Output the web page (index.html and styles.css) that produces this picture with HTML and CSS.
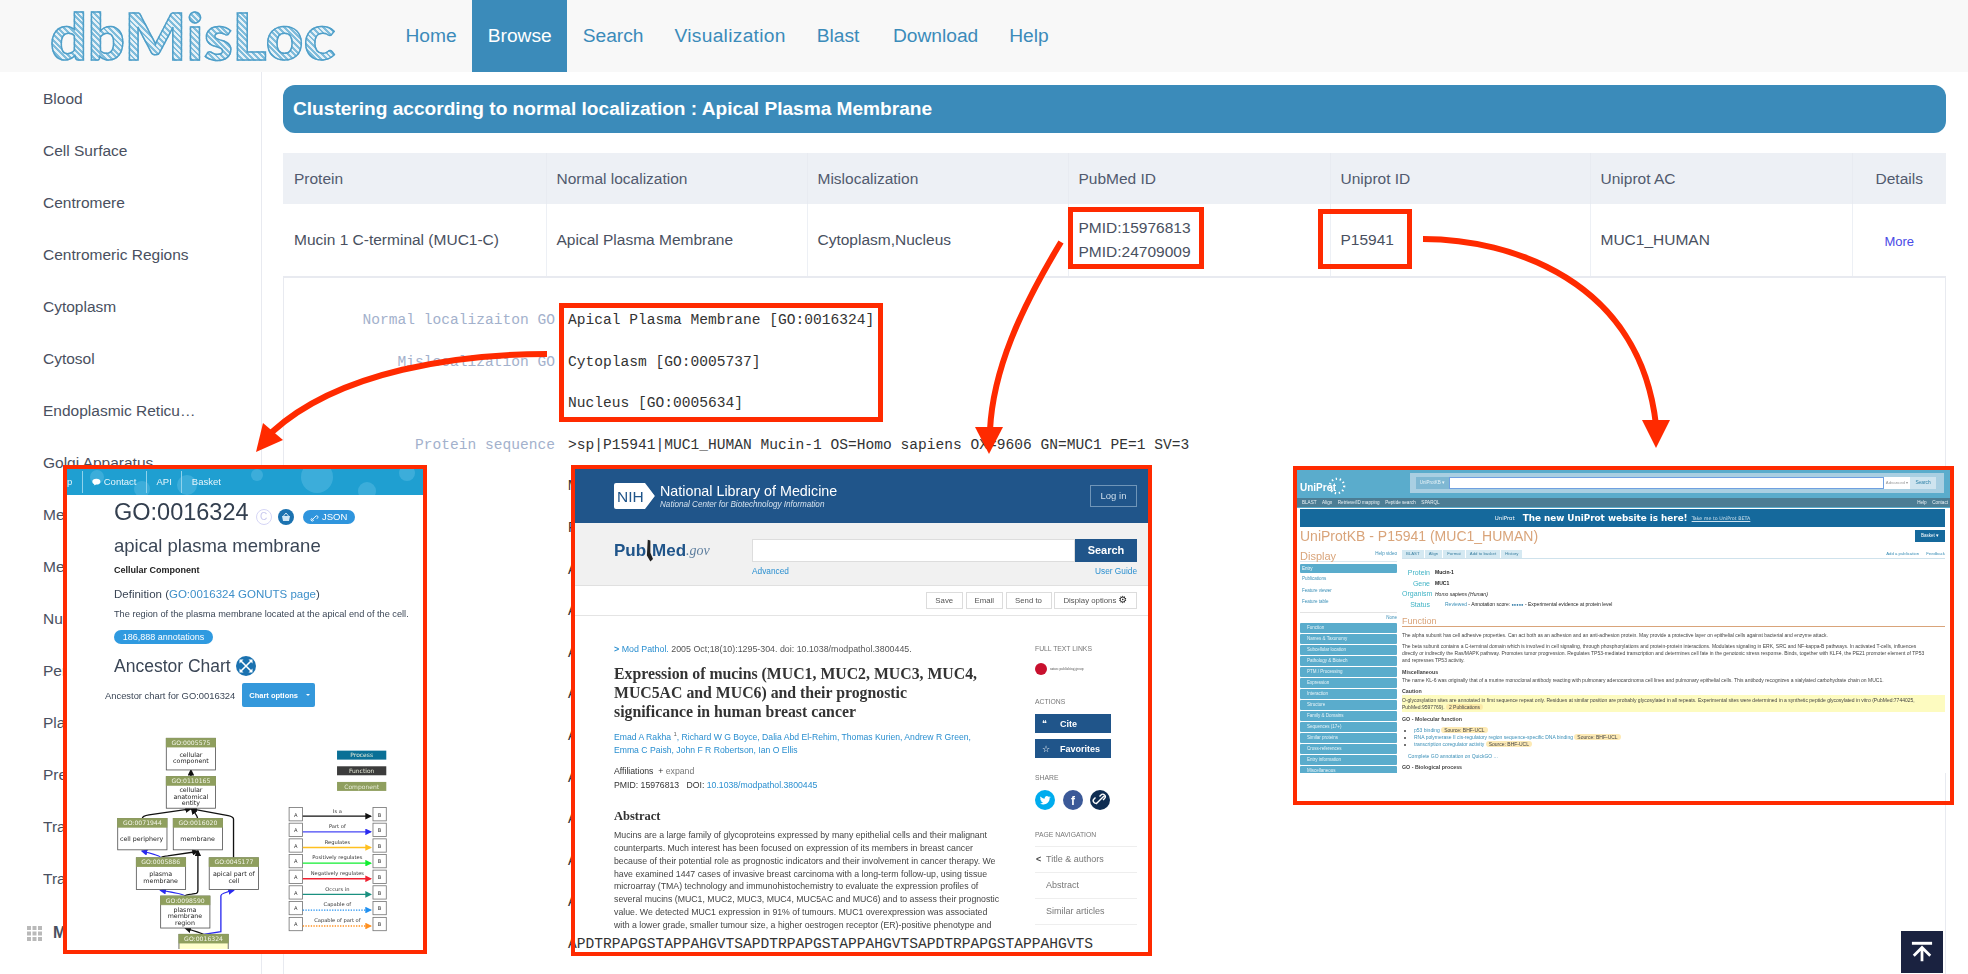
FILE: index.html
```html
<!DOCTYPE html>
<html lang="en">
<head>
<meta charset="utf-8">
<title>dbMisLoc</title>
<link rel="stylesheet" href="styles.css">
</head>
<body>
<div class="page">
  <header class="topbar">
    <div class="logo"><span class="logo-text">dbMisLoc</span></div>
    <nav class="nav">
      <a class="nav-item">Home</a>
      <a class="nav-item active">Browse</a>
      <a class="nav-item">Search</a>
      <a class="nav-item nav-wide">Visualization</a>
      <a class="nav-item nav-blast">Blast</a>
      <a class="nav-item">Download</a>
      <a class="nav-item">Help</a>
    </nav>
  </header>
  <div class="main">
    <aside class="sidebar">
      <ul class="side-list">
        <li>Blood</li>
        <li>Cell Surface</li>
        <li>Centromere</li>
        <li>Centromeric Regions</li>
        <li>Cytoplasm</li>
        <li>Cytosol</li>
        <li>Endoplasmic Reticulum</li>
        <li>Golgi Apparatus</li>
        <li>Membrane</li>
        <li>Metaphase Plate</li>
        <li>Nucleus</li>
        <li>Perinuclear Region</li>
        <li>Plasma Membrane</li>
        <li>Presynaptic Membrane</li>
        <li>Trans-Golgi Network</li>
        <li>Transport Vesicle</li>
      </ul>
      <div class="side-foot">
        <svg class="grid-ico" viewBox="0 0 15 15"><g fill="#b9b9b9"><rect width="4" height="4"/><rect x="5.5" width="4" height="4"/><rect x="11" width="4" height="4"/><rect y="5.5" width="4" height="4"/><rect x="5.5" y="5.5" width="4" height="4"/><rect x="11" y="5.5" width="4" height="4"/><rect y="11" width="4" height="4"/><rect x="5.5" y="11" width="4" height="4"/><rect x="11" y="11" width="4" height="4"/></g></svg>
        <span class="side-foot-label">Mislocalization</span>
      </div>
    </aside>
    <main class="content">
      <h1 class="title-bar">Clustering according to normal localization : Apical Plasma Membrane</h1>
      <div class="table-wrap">
        <table class="data-table">
          <colgroup><col class="c1"><col class="c2"><col class="c3"><col class="c4"><col class="c5"><col class="c6"><col class="c7"></colgroup>
          <thead>
            <tr><th>Protein</th><th>Normal localization</th><th>Mislocalization</th><th>PubMed ID</th><th>Uniprot ID</th><th>Uniprot AC</th><th class="center">Details</th></tr>
          </thead>
          <tbody>
            <tr>
              <td>Mucin 1 C-terminal (MUC1-C)</td>
              <td>Apical Plasma Membrane</td>
              <td>Cytoplasm,Nucleus</td>
              <td><div class="pmid">PMID:15976813</div><div class="pmid">PMID:24709009</div></td>
              <td>P15941</td>
              <td>MUC1_HUMAN</td>
              <td class="center"><a class="more">More</a></td>
            </tr>
          </tbody>
        </table>
        <div class="detail">
          <div class="d-label">Normal localizaiton GO</div><div class="d-val">Apical Plasma Membrane [GO:0016324]</div>
          <div class="d-label">Mislocalization GO</div><div class="d-val">Cytoplasm [GO:0005737]</div>
          <div class="d-label"></div><div class="d-val">Nucleus [GO:0005634]</div>
          <div class="d-label">Protein sequence</div><div class="d-val">&gt;sp|P15941|MUC1_HUMAN Mucin-1 OS=Homo sapiens OX=9606 GN=MUC1 PE=1 SV=3</div>
          <div class="d-label"></div><div class="d-val">MTPGTQSPFFLLLLLTVLTVVTGSGHASSTPGGEKETSATQRSSVPSSTEKNAFNSSLED</div>
          <div class="d-label"></div><div class="d-val">PSTDYYQELQRDISEMFLQIYKQGGFLGLSNIKFRPGSVVVQLTLAFREGTINVHDVETQ</div>
          <div class="d-label"></div><div class="d-val">APDTRPAPGSTAPPAHGVTSAPDTRPAPGSTAPPAHGVTSAPDTRPAPGSTAPPAHGVTS</div>
          <div class="d-label"></div><div class="d-val">APDTRPAPGSTAPPAHGVTSAPDTRPAPGSTAPPAHGVTSAPDTRPAPGSTAPPAHGVTS</div>
          <div class="d-label"></div><div class="d-val">APDTRPAPGSTAPPAHGVTSAPDTRPAPGSTAPPAHGVTSAPDTRPAPGSTAPPAHGVTS</div>
          <div class="d-label"></div><div class="d-val">APDTRPAPGSTAPPAHGVTSAPDTRPAPGSTAPPAHGVTSAPDTRPAPGSTAPPAHGVTS</div>
          <div class="d-label"></div><div class="d-val">APDTRPAPGSTAPPAHGVTSAPDTRPAPGSTAPPAHGVTSAPDTRPAPGSTAPPAHGVTS</div>
          <div class="d-label"></div><div class="d-val">APDTRPAPGSTAPPAHGVTSAPDTRPAPGSTAPPAHGVTSAPDTRPAPGSTAPPAHGVTS</div>
          <div class="d-label"></div><div class="d-val">APDTRPAPGSTAPPAHGVTSAPDTRPAPGSTAPPAHGVTSAPDTRPAPGSTAPPAHGVTS</div>
          <div class="d-label"></div><div class="d-val">APDTRPAPGSTAPPAHGVTSAPDTRPAPGSTAPPAHGVTSAPDTRPAPGSTAPPAHGVTS</div>
          <div class="d-label"></div><div class="d-val">APDTRPAPGSTAPPAHGVTSAPDTRPAPGSTAPPAHGVTSAPDTRPAPGSTAPPAHGVTS</div>
          <div class="d-label"></div><div class="d-val">APDTRPAPGSTAPPAHGVTSAPDTRPAPGSTAPPAHGVTSAPDTRPAPGSTAPPAHGVTS</div>
          <div class="d-label"></div><div class="d-val">APDTRPAPGSTAPPAHGVTSAPDTRPAPGSTAPPAHGVTSAPDTRPAPGSTAPPAHGVTS</div>
        </div>
      </div>
    </main>
  </div>

  <!-- Annotation overlay: highlight boxes -->
  <div class="hl hl-go"></div>
  <div class="hl hl-pmid"></div>
  <div class="hl hl-uni"></div>

  <!-- GO window -->
  <section class="shot shot-go">
    <div class="go-inner">
      <div class="go-top">
        <svg class="go-bubbles" viewBox="0 0 356 26" preserveAspectRatio="none"><g fill="#5fc0e6" opacity=".45"><circle cx="30" cy="8" r="7"/><circle cx="120" cy="16" r="10"/><circle cx="190" cy="6" r="6"/><circle cx="250" cy="8" r="16"/><circle cx="300" cy="22" r="9"/><circle cx="340" cy="4" r="8"/><circle cx="75" cy="20" r="8"/></g></svg>
        <span class="go-tab go-tab-p">p</span>
        <span class="go-tab go-tab-contact"><svg class="go-chat" viewBox="0 0 10 8"><ellipse cx="5" cy="3.6" rx="4.6" ry="3.2" fill="#fff"/><path d="M3 6l-1 2 3-1.4z" fill="#fff"/></svg>Contact</span>
        <span class="go-tab">API</span>
        <span class="go-tab go-tab-last">Basket</span>
      </div>
      <div class="go-body">
        <div class="go-idrow">
          <h2 class="go-id">GO:0016324</h2>
          <span class="go-c">C</span>
          <svg class="go-basket" viewBox="0 0 16 16"><circle cx="8" cy="8" r="8" fill="#1b72b0"/><path d="M4 7h8l-1 5H5z" fill="#cfe6f5"/><path d="M5.5 7L8 4l2.500 3" fill="none" stroke="#cfe6f5"/></svg>
          <span class="go-json"><svg class="go-link" viewBox="0 0 10 10"><path d="M1.500 8.500l3-3m-2 0l-1 1a1.400 1.400 0 0 0 2 2l1-1m1-3l1-1a1.400 1.400 0 0 1 2 2l-1 1m-3-1l2-2" fill="none" stroke="#fff" stroke-width="1"/></svg>JSON</span>
        </div>
        <div class="go-name">apical plasma membrane</div>
        <div class="go-kind">Cellular Component</div>
        <div class="go-def">Definition (<a class="go-a">GO:0016324 GONUTS page</a>)</div>
        <div class="go-desc">The region of the plasma membrane located at the apical end of the cell.</div>
        <div class="go-pill">186,888 annotations</div>
        <div class="go-anc"><span>Ancestor Chart</span>
          <svg class="go-expand" viewBox="0 0 20 20"><circle cx="10" cy="10" r="10" fill="#1b72b0"/><path d="M5 5l10 10M15 5L5 15" stroke="#fff" stroke-width="1.600"/><path d="M3.500 3.500h4l-4 4zM16.500 3.500v4l-4-4zM3.500 16.500v-4l4 4zM16.500 16.500h-4l4-4z" fill="#fff"/></svg>
        </div>
        <div class="go-chartrow"><span>Ancestor chart for GO:0016324</span><span class="go-btn">Chart options<i class="go-caret"></i></span></div>
        <svg class="go-chart" viewBox="340 830 830 640">
          <defs>
            <marker id="mk" markerWidth="5" markerHeight="5" refX="4" refY="2.500" orient="auto"><path d="M0 0L5 2.500 0 5z" fill="#111"/></marker>
            <marker id="mb" markerWidth="5" markerHeight="5" refX="4" refY="2.500" orient="auto"><path d="M0 0L5 2.500 0 5z" fill="#2a2af0"/></marker>
            <marker id="my" markerWidth="5" markerHeight="5" refX="4" refY="2.500" orient="auto"><path d="M0 0L5 2.500 0 5z" fill="#ffc020"/></marker>
            <marker id="mg" markerWidth="5" markerHeight="5" refX="4" refY="2.500" orient="auto"><path d="M0 0L5 2.500 0 5z" fill="#10ee30"/></marker>
            <marker id="mr" markerWidth="5" markerHeight="5" refX="4" refY="2.500" orient="auto"><path d="M0 0L5 2.500 0 5z" fill="#f02030"/></marker>
            <marker id="mt" markerWidth="5" markerHeight="5" refX="4" refY="2.500" orient="auto"><path d="M0 0L5 2.500 0 5z" fill="#1a9080"/></marker>
            <marker id="ml" markerWidth="5" markerHeight="5" refX="4" refY="2.500" orient="auto"><path d="M0 0L5 2.500 0 5z" fill="#2090f0"/></marker>
            <marker id="mo" markerWidth="5" markerHeight="5" refX="4" refY="2.500" orient="auto"><path d="M0 0L5 2.500 0 5z" fill="#ff9020"/></marker>
          </defs>
          <g fill="none" stroke-width="4">
            <path class="e-k" d="M570 950V933" marker-end="url(#mk)"/>
            <path class="e-k" d="M424 1078q0-8 20-11l125-18" marker-end="url(#mk)"/>
            <path class="e-k" d="M590 1078q0-8-18-29" marker-end="url(#mk)"/>
            <path class="e-k" d="M698 1196V1080q0-8-16-11l-110-20" marker-end="url(#mk)"/>
            <path class="e-k" d="M480 1196q0-4 20-6l90-13" marker-end="url(#mk)"/>
            <path class="e-k" d="M552 1311q0-4 20-6l14-2q5-1 5-10V1175" marker-end="url(#mk)"/>
            <path class="e-k" d="M608 1426q-12-6-54-18" marker-end="url(#mk)"/>
            <path class="e-b" d="M480 1196q0-6-57-20" marker-end="url(#mb)"/>
            <path class="e-b" d="M552 1311q0-6-73-17" marker-end="url(#mb)"/>
            <path class="e-b" d="M608 1426l52-8V1310q0-8 38-16" marker-end="url(#mb)"/>
          </g>
          <g class="node"><rect x="496" y="837" width="148" height="95"/><rect class="nh" x="496" y="837" width="148" height="26"/><text class="nt" x="570" y="857">GO:0005575</text><text x="570" y="892">cellular</text><text x="570" y="912">component</text></g>
          <g class="node"><rect x="496" y="952" width="148" height="95"/><rect class="nh" x="496" y="952" width="148" height="26"/><text class="nt" x="570" y="972">GO:0110165</text><text x="570" y="998">cellular</text><text x="570" y="1018">anatomical</text><text x="570" y="1037">entity</text></g>
          <g class="node"><rect x="350" y="1078" width="148" height="94"/><rect class="nh" x="350" y="1078" width="148" height="26"/><text class="nt" x="424" y="1098">GO:0071944</text><text x="422" y="1144">cell periphery</text></g>
          <g class="node"><rect x="517" y="1078" width="148" height="94"/><rect class="nh" x="517" y="1078" width="148" height="26"/><text class="nt" x="591" y="1098">GO:0016020</text><text x="590" y="1144">membrane</text></g>
          <g class="node"><rect x="406" y="1196" width="148" height="95"/><rect class="nh" x="406" y="1196" width="148" height="26"/><text class="nt" x="479" y="1216">GO:0005886</text><text x="479" y="1252">plasma</text><text x="479" y="1271">membrane</text></g>
          <g class="node"><rect x="625" y="1196" width="148" height="95"/><rect class="nh" x="625" y="1196" width="148" height="26"/><text class="nt" x="699" y="1216">GO:0045177</text><text x="699" y="1252">apical part of</text><text x="699" y="1271">cell</text></g>
          <g class="node"><rect x="479" y="1311" width="148" height="96"/><rect class="nh" x="479" y="1311" width="148" height="26"/><text class="nt" x="553" y="1331">GO:0098590</text><text x="552" y="1358">plasma</text><text x="552" y="1377">membrane</text><text x="552" y="1397">region</text></g>
          <g class="node"><rect class="ny" x="534" y="1426" width="148" height="50"/><rect class="nh" x="534" y="1426" width="148" height="26"/><text class="nt" x="608" y="1446">GO:0016324</text></g>
          <g class="legend">
            <rect fill="#0a7096" x="1009" y="874" width="148" height="27"/><text x="1083" y="894">Process</text>
            <rect fill="#3c3c3c" x="1009" y="921" width="148" height="27"/><text x="1083" y="941">Function</text>
            <rect fill="#8f9f5e" x="1009" y="968" width="148" height="27"/><text x="1083" y="988">Component</text>
          </g>
          <g class="rel">
            <g><rect x="865" y="1045" width="40" height="40"/><rect x="1117" y="1045" width="40" height="40"/><text x="885" y="1072">A</text><text x="1137" y="1072">B</text><text x="1010" y="1060">Is a</text><path d="M906 1071H1110" stroke="#111" marker-end="url(#mk)"/></g>
            <g><rect x="865" y="1092" width="40" height="40"/><rect x="1117" y="1092" width="40" height="40"/><text x="885" y="1119">A</text><text x="1137" y="1119">B</text><text x="1010" y="1106">Part of</text><path d="M906 1118H1110" stroke="#4646f5" marker-end="url(#mb)"/></g>
            <g><rect x="865" y="1139" width="40" height="40"/><rect x="1117" y="1139" width="40" height="40"/><text x="885" y="1166">A</text><text x="1137" y="1166">B</text><text x="1010" y="1154">Regulates</text><path d="M906 1165H1110" stroke="#ffc020" marker-end="url(#my)"/></g>
            <g><rect x="865" y="1186" width="40" height="40"/><rect x="1117" y="1186" width="40" height="40"/><text x="885" y="1213">A</text><text x="1137" y="1213">B</text><text x="1010" y="1201">Positively regulates</text><path d="M906 1212H1110" stroke="#10ee30" marker-end="url(#mg)"/></g>
            <g><rect x="865" y="1233" width="40" height="40"/><rect x="1117" y="1233" width="40" height="40"/><text x="885" y="1260">A</text><text x="1137" y="1260">B</text><text x="1010" y="1248">Negatively regulates</text><path d="M906 1259H1110" stroke="#f02030" marker-end="url(#mr)"/></g>
            <g><rect x="865" y="1280" width="40" height="40"/><rect x="1117" y="1280" width="40" height="40"/><text x="885" y="1307">A</text><text x="1137" y="1307">B</text><text x="1010" y="1295">Occurs in</text><path d="M906 1306H1110" stroke="#1a9080" marker-end="url(#mt)"/></g>
            <g><rect x="865" y="1327" width="40" height="40"/><rect x="1117" y="1327" width="40" height="40"/><text x="885" y="1354">A</text><text x="1137" y="1354">B</text><text x="1010" y="1342">Capable of</text><path d="M906 1353H1110" stroke="#2090f0" stroke-dasharray="4 4" marker-end="url(#ml)"/></g>
            <g><rect x="865" y="1375" width="40" height="40"/><rect x="1117" y="1375" width="40" height="40"/><text x="885" y="1402">A</text><text x="1137" y="1402">B</text><text x="1010" y="1390">Capable of part of</text><path d="M906 1401H1110" stroke="#ff9020" stroke-dasharray="4 4" marker-end="url(#mo)"/></g>
          </g>
        </svg>
      </div>
    </div>
  </section>

  <!-- PubMed window -->
  <section class="shot shot-pm">
    <div class="pm-inner">
      <div class="pm-top">
        <div class="pm-brand">
          <svg class="nih" viewBox="0 0 41 26"><path d="M2 0h29l10 13-10 13H2a2 2 0 0 1-2-2V2a2 2 0 0 1 2-2z" fill="#fff"/><path d="M33 0l9 13-9 13" fill="none" stroke="#20558a" stroke-width="1.500"/><text class="nih-t" x="3" y="19">NIH</text></svg>
          <div>
            <div class="pm-nlm">National Library of Medicine</div>
            <div class="pm-ncbi">National Center for Biotechnology Information</div>
          </div>
        </div>
        <span class="pm-login">Log in</span>
      </div>
      <div class="pm-search">
        <div class="pm-logo"><span class="pm-pub">Pub</span><svg class="pm-mark" viewBox="0 0 8 26"><path d="M2 0l3 1v14l3 7-3 3-4-7z" fill="#222"/></svg><span class="pm-pub">Med</span><span class="pm-gov">.gov</span></div>
        <div class="pm-form">
          <div class="pm-formrow"><span class="pm-input"></span><span class="pm-go">Search</span></div>
          <div class="pm-links"><a>Advanced</a><a>User Guide</a></div>
        </div>
      </div>
      <div class="pm-actions"><span class="pm-act">Save</span><span class="pm-act">Email</span><span class="pm-act">Send to</span><span class="pm-act pm-act-wide">Display options <b class="pm-gear">⚙</b></span></div>
      <div class="pm-article">
        <div class="pm-main">
          <div class="pm-cite"><a class="pm-a"><b>&gt;</b> Mod Pathol.</a> 2005 Oct;18(10):1295-304. doi: 10.1038/modpathol.3800445.</div>
          <h3 class="pm-title">Expression of mucins (MUC1, MUC2, MUC3, MUC4, MUC5AC and MUC6) and their prognostic significance in human breast cancer</h3>
          <div class="pm-auth">Emad A Rakha <sup class="pm-sup">1</sup>, Richard W G Boyce, Dalia Abd El-Rehim, Thomas Kurien, Andrew R Green, Emma C Paish, John F R Robertson, Ian O Ellis</div>
          <div class="pm-aff">Affiliations &nbsp;+ <span class="pm-mute">expand</span></div>
          <div class="pm-ids">PMID: 15976813 &nbsp;&nbsp;DOI: <a class="pm-a">10.1038/modpathol.3800445</a></div>
          <h4 class="pm-abs">Abstract</h4>
          <p class="pm-para">Mucins are a large family of glycoproteins expressed by many epithelial cells and their malignant counterparts. Much interest has been focused on expression of its members in breast cancer because of their potential role as prognostic indicators and their involvement in cancer therapy. We have examined 1447 cases of invasive breast carcinoma with a long-term follow-up, using tissue microarray (TMA) technology and immunohistochemistry to evaluate the expression profiles of several mucins (MUC1, MUC2, MUC3, MUC4, MUC5AC and MUC6) and to assess their prognostic value. We detected MUC1 expression in 91% of tumours. MUC1 overexpression was associated with a lower grade, smaller tumour size, a higher oestrogen receptor (ER)-positive phenotype and</p>
        </div>
        <div class="pm-side">
          <div class="pm-h">FULL TEXT LINKS</div>
          <div class="pm-npg"><i class="pm-npg-dot"></i>nature publishing group</div>
          <div class="pm-h pm-h-act">ACTIONS</div>
          <div class="pm-sbtn"><b>❝</b><span>Cite</span></div>
          <div class="pm-sbtn"><b>☆</b><span>Favorites</span></div>
          <div class="pm-h pm-h-share">SHARE</div>
          <div class="pm-share">
            <svg class="pm-circle" viewBox="0 0 20 20"><circle cx="10" cy="10" r="10" fill="#00acee"/><path d="M15 7c-.4.200-.800.300-1.200.400.400-.300.800-.700.900-1.200-.4.300-.900.400-1.300.500a2.100 2.100 0 0 0-3.600 1.900C8 8.500 6.500 7.700 5.500 6.500c-.6 1-.3 2.200.6 2.800-.3 0-.6-.1-.9-.3 0 1 .7 1.900 1.700 2.100-.3.100-.6.100-.9 0 .3.900 1.100 1.400 2 1.500-.9.700-2 1-3 .9 3.800 2.300 9.700.4 9.700-5.700.4-.200.800-.600 1.300-1.100z" fill="#fff"/></svg>
            <svg class="pm-circle" viewBox="0 0 20 20"><circle cx="10" cy="10" r="10" fill="#3b5998"/><text class="pm-f" x="10" y="15">f</text></svg>
            <svg class="pm-circle" viewBox="0 0 20 20"><circle cx="10" cy="10" r="10" fill="#0f2d52"/><path d="M6 14l8-8m-4.500.500l1.500-1.500a2.300 2.300 0 0 1 3.500 3.500l-1.500 1.500m-4 1l-1.500 1.500a2.300 2.300 0 0 1-3.500-3.500l1.500-1.500" fill="none" stroke="#fff" stroke-width="1.400"/></svg>
          </div>
          <div class="pm-h pm-h-nav">PAGE NAVIGATION</div>
          <div class="pm-navlist">
            <div class="pm-navi"><b class="pm-chev">&lt;</b>Title &amp; authors</div>
            <div class="pm-navi">Abstract</div>
            <div class="pm-navi">Similar articles</div>
          </div>
        </div>
      </div>
    </div>
  </section>

  <!-- UniProt window -->
  <section class="shot shot-up">
    <div class="up-inner">
      <div class="up-head">
        <div class="up-headrow">
          <div class="up-logo">UniProt<svg class="up-ring" viewBox="0 0 20 20"><circle cx="10" cy="10" r="8" fill="none" stroke="#fff" stroke-width="2.500" stroke-dasharray="1.500 3"/></svg></div>
          <div class="up-searchbox">
            <span class="up-drop">UniProtKB ▾</span><span class="up-input"></span><span class="up-adv">Advanced ▾</span><span class="up-go">Search</span>
          </div>
        </div>
        <div class="up-nav"><span>BLAST</span><span>Align</span><span>Retrieve/ID mapping</span><span>Peptide search</span><span>SPARQL</span><span class="up-nav-r">Help</span><span>Contact</span></div>
      </div>
      <div class="up-banner"><span class="up-banner-logo">UniProt</span><b>The new UniProt website is here!</b><u>Take me to UniProt BETA</u></div>
      <div class="up-titlerow"><h3 class="up-title">UniProtKB - P15941 (MUC1_HUMAN)</h3><span class="up-basket">Basket ▾</span></div>
      <div class="up-cols">
        <div class="up-left">
          <div class="up-disp"><span class="up-display">Display</span><span class="up-help">Help video</span></div>
          <div class="up-sel">Entry</div>
          <div class="up-link">Publications</div>
          <div class="up-link">Feature viewer</div>
          <div class="up-link">Feature table</div>
          <div class="up-none">None</div>
          <div class="up-item">Function</div>
          <div class="up-item">Names &amp; Taxonomy</div>
          <div class="up-item">Subcellular location</div>
          <div class="up-item">Pathology &amp; Biotech</div>
          <div class="up-item">PTM / Processing</div>
          <div class="up-item">Expression</div>
          <div class="up-item">Interaction</div>
          <div class="up-item">Structure</div>
          <div class="up-item">Family &amp; Domains</div>
          <div class="up-item">Sequences (17+)</div>
          <div class="up-item">Similar proteins</div>
          <div class="up-item">Cross-references</div>
          <div class="up-item">Entry information</div>
          <div class="up-item">Miscellaneous</div>
        </div>
        <div class="up-right">
          <div class="up-tools"><span class="up-tool">BLAST</span><span class="up-tool">Align</span><span class="up-tool">Format</span><span class="up-tool">Add to basket</span><span class="up-tool">History</span><span class="up-tool-r">Add a publication</span><span class="up-tool-r">Feedback</span></div>
          <div class="up-facts">
            <span class="up-k">Protein</span><b class="up-v">Mucin-1</b>
            <span class="up-k">Gene</span><b class="up-v">MUC1</b>
            <span class="up-k">Organism</span><i class="up-v">Homo sapiens (Human)</i>
            <span class="up-k">Status</span><span class="up-v"><span class="up-rev">Reviewed</span> - Annotation score: <span class="up-dots">●●●●●</span> - Experimental evidence at protein level</span>
          </div>
          <h4 class="up-h">Function</h4>
          <p class="up-p">The alpha subunit has cell adhesive properties. Can act both as an adhesion and an anti-adhesion protein. May provide a protective layer on epithelial cells against bacterial and enzyme attack.</p>
          <p class="up-p">The beta subunit contains a C-terminal domain which is involved in cell signaling, through phosphorylations and protein-protein interactions. Modulates signaling in ERK, SRC and NF-kappa-B pathways. In activated T-cells, influences<br>directly or indirectly the Ras/MAPK pathway. Promotes tumor progression. Regulates TP53-mediated transcription and determines cell fate in the genotoxic stress response. Binds, together with KLF4, the PE21 promoter element of TP53<br>and represses TP53 activity.</p>
          <div class="up-sub up-sub-m">Miscellaneous</div>
          <p class="up-p up-p-m">The name KL-6 was originally that of a murine monoclonal antibody reacting with pulmonary adenocarcinoma cell lines and pulmonary epithelial cells. This antibody recognizes a sialylated carbohydrate chain on MUC1.</p>
          <div class="up-sub">Caution</div>
          <p class="up-caution">O-glycosylation sites are annotated in first sequence repeat only. Residues at similar position are probably glycosylated in all repeats. Experimental sites were determined in a synthetic peptide glycosylated in vitro (PubMed:7744025,<br>PubMed:9597769). <span class="up-src up-src-y">2 Publications</span></p>
          <div class="up-sub up-sub-go">GO - Molecular function</div>
          <ul class="up-list">
            <li><a>p53 binding</a> <span class="up-src">Source: BHF-UCL</span></li>
            <li><a>RNA polymerase II cis-regulatory region sequence-specific DNA binding</a> <span class="up-src">Source: BHF-UCL</span></li>
            <li><a>transcription coregulator activity</a> <span class="up-src">Source: BHF-UCL</span></li>
          </ul>
          <div class="up-complete">Complete GO annotation on QuickGO ...</div>
          <div class="up-sub">GO - Biological process</div>
        </div>
      </div>
    </div>
  </section>

  <!-- Red arrows -->
  <svg class="arrows" viewBox="0 0 1968 974">
    <g fill="none" stroke="#ff2a00" stroke-width="6">
      <path d="M547 354C460 354 340 370 272 432"/>
      <path d="M1061 242C1020 310 993 370 990 430"/>
      <path d="M1423 239C1510 239 1640 280 1656 425"/>
    </g>
    <g fill="#ff2a00">
      <path d="M256 452L263 423 283 440z"/>
      <path d="M989 454L975 427H1003z"/>
      <path d="M1656 448L1642 420H1670z"/>
    </g>
  </svg>

  <a class="to-top"><svg class="to-top-ico" viewBox="0 0 24 24"><path d="M1 2.500H23" stroke="#fff" stroke-width="3.200" fill="none"/><path d="M12 22V8M3 16l9-9 9 9" stroke="#fff" stroke-width="3" fill="none"/></svg></a>
</div>
</body>
</html>
```

FILE: styles.css
```css
* { box-sizing: border-box; }
html, body { margin: 0; padding: 0; }
body { background: #fff; font-family: "Liberation Sans", Arial, sans-serif; color: #495060; }
ul { list-style: none; margin: 0; padding: 0; }
h1, h2, h3, h4, p { margin: 0; font-weight: normal; }

.page { position: relative; width: 1968px; height: 974px; overflow: hidden; display: flex; flex-direction: column; }

/* Top bar */
.topbar { height: 72px; background: #f8f8f8; display: flex; flex: none; }
.logo { width: 390px; padding-left: 48px; }
.logo-text {
  display: inline-block; padding: 0 2px; font-family: "Lato", sans-serif; font-weight: 900; font-size: 65px; line-height: 70px; letter-spacing: .6px;
  color: transparent; -webkit-text-stroke: 1.500px #4f9fc9;
  background: repeating-linear-gradient(45deg, #7fbcdb 0 2px, #e6f1f7 2px 4px);
  -webkit-background-clip: text; background-clip: text;
}
.nav { display: flex; }
.nav-item { padding: 0 15.500px; line-height: 72px; font-size: 19.200px; color: #3b8bba; }
.nav-wide { letter-spacing: .3px; }
.nav-blast { padding-right: 18px; }
.nav-item.active { background: #3b8bba; color: #fff; }

/* Body */
.main { flex: 1; display: flex; min-height: 0; }
.sidebar { width: 262px; flex: none; border-right: 1px solid #e8eaf0; position: relative; padding: 1px 0 0 43px; }
.side-list li { height: 52px; line-height: 52px; font-size: 15.500px; color: #495060; width: 155px; white-space: nowrap; overflow: hidden; text-overflow: ellipsis; }
.side-foot { display: flex; align-items: center; margin: 6px 0 0 -16px; height: 44px; gap: 11px; }
.grid-ico { width: 15px; height: 15px; }
.side-foot-label { font-weight: 700; font-size: 16px; color: #495060; }

.content { width: 1684px; flex: none; padding: 13px 0 0 21px; }
.title-bar { width: 1663px; height: 48px; line-height: 48px; background: #3b8bba; border-radius: 12px; padding-left: 10px; color: #fff; font-size: 19.100px; font-weight: 700; }
.table-wrap { margin-top: 20px; width: 1663px; }
.data-table { width: 1663px; table-layout: fixed; border-collapse: collapse; font-size: 15.500px; }
.c1 { width: 263px; } .c2 { width: 261px; } .c3 { width: 261px; } .c4 { width: 262px; } .c5 { width: 260px; } .c6 { width: 262px; } .c7 { width: 94px; }
.data-table th { height: 51px; background: #edf0f5; font-weight: 400; text-align: left; padding: 0 0 0 10px; color: #515a6e; border-left: 1px solid #e8ebf1; }
.data-table td { height: 73px; padding: 0 0 0 10px; color: #495060; border-left: 1px solid #edf0f5; border-bottom: 2px solid #e8eaf0; }
.data-table th:first-child, .data-table td:first-child { border-left: none; padding-left: 11px; }
.data-table .center { text-align: center; padding: 0; }
.pmid { line-height: 24px; }
.more { color: #4a4ae6; font-size: 13px; position: relative; top: 1px; }

.detail {
  display: grid; grid-template-columns: 271px 1fr; column-gap: 13px; grid-auto-rows: 41.600px;
  padding-top: 22px; height: 697px; border-left: 1px solid #e8eaf0; border-right: 1px solid #e8eaf0;
  font-family: "Liberation Mono", "Courier New", monospace; font-size: 14.580px;
}
.d-label { text-align: right; color: #a3b1cc; line-height: 41.600px; white-space: nowrap; }
.d-val { color: #333; line-height: 41.600px; white-space: nowrap; }

/* Highlights */
.hl { position: absolute; border: 5px solid #ff2a00; }
.hl-go { left: 559px; top: 303px; width: 324px; height: 119px; }
.hl-pmid { left: 1068px; top: 207px; width: 136px; height: 62px; }
.hl-uni { left: 1318px; top: 209px; width: 94px; height: 60px; }

.arrows { position: absolute; left: 0; top: 0; width: 1968px; height: 974px; pointer-events: none; }

/* Screens */
.shot { position: absolute; border: 4.500px solid #ff2a00; overflow: hidden; }
.shot-go { left: 63px; top: 465px; width: 364px; height: 489px; background: #fff; }
.shot-pm { left: 571px; top: 465px; width: 581px; height: 491px; border-width: 4px; }
.shot-up { left: 1293px; top: 466px; width: 661px; height: 339px; border-width: 4px; }

/* GO */
.go-inner { filter: blur(.35px); color: #3b4656; }
.go-top { position: relative; height: 26px; background: #1f9fd1; display: flex; align-items: center; padding-left: 0; color: #e6f5fb; font-size: 9.500px; }
.go-bubbles { position: absolute; inset: 0; width: 100%; height: 100%; }
.go-tab { position: relative; height: 22px; line-height: 22px; padding: 0 9.500px; border-right: 1px solid #8fd2ec; white-space: nowrap; display: flex; align-items: center; }
.go-tab-p { width: 16px; padding: 0 0 0 0; }
.go-tab-contact { width: 64px; padding-left: 9px; }
.go-chat { width: 10px; height: 8px; margin-right: 3px; }
.go-tab-last { border: none; }
.go-body { padding-left: 47px; }
.go-idrow { display: flex; align-items: center; height: 34px; }
.go-id { font-size: 23.500px; line-height: 34px; color: #333f4f; }
.go-c { width: 16px; height: 16px; line-height: 14px; border-radius: 50%; border: 1px solid #d5d5f5; color: #c9c9ee; font-size: 10px; text-align: center; margin: 10px 6px 0 7px; }
.go-basket { width: 16px; height: 16px; margin: 10px 9px 0 0; }
.go-json { height: 14px; width: 52px; border-radius: 7px; background: #2f95dd; color: #fff; font-size: 9.500px; line-height: 14px; margin-top: 10px; display: flex; align-items: center; justify-content: center; gap: 3px; }
.go-link { width: 9px; height: 9px; }
.go-name { font-size: 18.500px; line-height: 34px; }
.go-kind { font-size: 9px; font-weight: 700; line-height: 14px; color: #222; }
.go-def { font-size: 11.500px; line-height: 16px; margin-top: 9px; }
.go-a { color: #3d8fc9; }
.go-desc { font-size: 9.200px; line-height: 14px; margin-top: 5px; white-space: nowrap; }
.go-pill { width: 99px; height: 14px; line-height: 14px; border-radius: 7px; background: #2f9ae0; color: #fff; font-size: 9px; text-align: center; margin-top: 9px; }
.go-anc { display: flex; align-items: center; gap: 5px; font-size: 17.500px; height: 24px; margin-top: 10px; }
.go-expand { width: 20px; height: 20px; }
.go-chartrow { display: flex; align-items: center; gap: 7px; margin: 5px 0 0 -9px; font-size: 9.400px; white-space: nowrap; }
.go-btn { width: 73px; height: 24px; background: #3498db; border-radius: 2px; color: #fff; font-size: 7.500px; font-weight: 700; display: flex; align-items: center; padding-left: 7px; gap: 8px; }
.go-caret { width: 0; height: 0; border: 2.500px solid transparent; border-top-color: #fff; border-bottom: none; }
.go-chart { display: block; width: 277px; height: 213px; margin-top: 29px; font-family: "DejaVu Sans", sans-serif; }
.e-k { stroke: #111; }
.e-b { stroke: #2a2af0; }
.node rect { fill: #fff; stroke: #555; stroke-width: 2.500; }
.node .nh { fill: #8f9f5e; stroke: #8f9f5e; }
.node .ny { fill: #ffffcc; }
.node text { font-size: 19px; fill: #222; text-anchor: middle; }
.node .nt { fill: #f3f5e8; font-size: 18.500px; }
.legend text { font-size: 18px; fill: #e6ebd8; text-anchor: middle; }
.rel rect { fill: #fff; stroke: #777; stroke-width: 2.500; }
.rel text { font-size: 15.500px; fill: #333; text-anchor: middle; }
.rel path { stroke-width: 4; fill: none; }

/* PubMed */
.pm-inner { height: 467px; background: #fff; overflow: hidden; filter: blur(.35px); color: #333; }
.pm-top { height: 54px; background: #20558a; padding: 0 11px 0 39px; display: flex; align-items: center; justify-content: space-between; }
.pm-brand { display: flex; align-items: center; gap: 5px; }
.nih { width: 41px; height: 26px; }
.nih-t { font-size: 15.500px; fill: #20558a; }
.pm-nlm { color: #fff; font-size: 14.300px; line-height: 18px; }
.pm-ncbi { color: #d5e2ee; font-size: 8.150px; font-style: italic; line-height: 10px; }
.pm-login { width: 47px; height: 22px; line-height: 20px; border: 1px solid #6f95b8; color: #cfdfec; font-size: 9.500px; text-align: center; }
.pm-search { height: 63px; background: #f1f1f1; border-bottom: 1px solid #e0e0e0; padding: 16px 11px 0 39px; display: flex; }
.pm-logo { width: 138px; display: flex; align-items: center; height: 26px; margin-top: -1px; color: #20558a; }
.pm-pub { font-size: 17px; font-weight: 700; }
.pm-mark { width: 7px; height: 26px; margin: 0 -1px 0 0; }
.pm-gov { font-family: "Liberation Serif", serif; font-style: italic; font-size: 14px; color: #5f7f9f; }
.pm-form { flex: 1; }
.pm-formrow { display: flex; height: 23px; }
.pm-input { flex: 1; background: #fff; border: 1px solid #ddd; }
.pm-go { width: 62px; background: #20558a; color: #fff; font-weight: 700; font-size: 11px; line-height: 23px; text-align: center; }
.pm-links { display: flex; justify-content: space-between; font-size: 8.300px; line-height: 14px; margin-top: 2px; color: #2a8fd0; }
.pm-actions { height: 30px; border-bottom: 1px solid #e4e4e4; display: flex; justify-content: flex-end; align-items: center; padding-right: 11px; gap: 2.500px; }
.pm-act { width: 37.500px; height: 17px; line-height: 15px; border: 1px solid #dcdcdc; font-size: 7.800px; text-align: center; color: #555; white-space: nowrap; }
.pm-act:nth-child(3) { width: 46px; }
.pm-act-wide { width: 83px; }
.pm-gear { font-weight: 400; color: #222; font-family: "DejaVu Sans", sans-serif; font-size: 10px; line-height: 10px; }
.pm-article { display: flex; padding: 27px 11px 0 39px; }
.pm-main { width: 421px; flex: none; }
.pm-cite { font-size: 8.850px; line-height: 12px; color: #555; white-space: nowrap; }
.pm-a { color: #2a8fd0; }
.pm-title { font-family: "Liberation Serif", serif; font-weight: 700; font-size: 15.800px; line-height: 19.200px; color: #333; margin-top: 9px; width: 370px; }
.pm-auth { font-size: 8.650px; line-height: 13px; color: #2a8fd0; margin-top: 9px; width: 372px; }
.pm-sup { color: #666; font-size: 6px; line-height: 0; }
.pm-aff { font-size: 8.700px; line-height: 12px; margin-top: 8px; }
.pm-mute { color: #777; }
.pm-ids { font-size: 8.700px; line-height: 12px; margin-top: 2px; white-space: nowrap; }
.pm-abs { font-family: "Liberation Serif", serif; font-weight: 700; font-size: 12.500px; line-height: 16px; margin-top: 17px; }
.pm-para { font-size: 8.760px; line-height: 12.800px; margin-top: 5.500px; width: 388px; color: #444; }
.pm-side { width: 102px; flex: none; font-size: 8.500px; color: #555; }
.pm-h { font-size: 6.800px; line-height: 12px; color: #777; white-space: nowrap; }
.pm-npg { display: flex; align-items: center; gap: 3px; font-size: 3.500px; height: 14px; margin-top: 7px; font-family: "Liberation Serif", serif; }
.pm-npg-dot { width: 12px; height: 12px; border-radius: 50%; background: #c8102e; }
.pm-h-act { margin-top: 20px; }
.pm-sbtn { width: 76px; height: 19px; background: #20558a; color: #fff; margin-top: 6px; display: flex; align-items: center; font-size: 9px; font-weight: 700; padding-left: 7px; gap: 10px; }
.pm-sbtn + .pm-sbtn { margin-top: 6px; }
.pm-sbtn b { font-weight: 400; width: 8px; }
.pm-h-share { margin-top: 14px; }
.pm-share { display: flex; gap: 7.500px; margin-top: 5px; }
.pm-circle { width: 20px; height: 22px; }
.pm-f { font-size: 12px; font-weight: 700; fill: #fff; text-anchor: middle; }
.pm-h-nav { margin-top: 18px; }
.pm-navlist { margin-top: 5px; border-top: 1px solid #eee; }
.pm-navi { height: 26px; line-height: 25px; border-bottom: 1px solid #eee; padding-left: 11px; font-size: 9px; color: #777; position: relative; }
.pm-chev { position: absolute; left: 1px; color: #444; font-weight: 700; }

/* UniProt */
.up-inner { height: 303px; background: #fff; overflow: hidden; filter: blur(.35px); font-size: 5px; color: #444; }
.up-head { height: 38px; background: #5aaccc; display: flex; flex-direction: column; }
.up-headrow { height: 28px; display: flex; padding: 3px 6px 0 3px; }
.up-logo { width: 110px; color: #fff; font-size: 10px; font-weight: 700; padding-top: 9px; position: relative; }
.up-ring { position: absolute; left: 28px; top: 3px; width: 18px; height: 20px; }
.up-searchbox { flex: 1; height: 20px; background: #a9cfe2; display: flex; align-items: center; padding: 0 8px 0 6px; }
.up-drop { width: 33px; height: 12px; line-height: 12px; background: #7fb8d3; color: #e8f4f8; font-size: 4.500px; text-align: center; }
.up-input { flex: 1; height: 12px; background: #fff; border: 1px solid #6fa0e0; }
.up-adv { width: 26px; height: 12px; line-height: 12px; background: #fff; color: #999; font-size: 4.300px; text-align: center; }
.up-go { width: 26px; height: 12px; line-height: 12px; background: #cfe4ef; color: #2a7fa5; font-size: 4.800px; text-align: center; }
.up-nav { height: 9px; margin-bottom: 1px; background: #4c7d94; color: #e8f0f4; font-size: 4.600px; line-height: 9px; display: flex; gap: 5.500px; padding: 0 2px 0 5px; white-space: nowrap; }
.up-nav-r { margin-left: auto; }
.up-banner { margin: 1px 5px 0 3px; height: 18px; background: #15699c; color: #fff; display: flex; align-items: center; justify-content: center; gap: 3px; font-family: "DejaVu Sans", sans-serif; white-space: nowrap; }
.up-banner b { font-size: 8.800px; }
.up-banner u { font-size: 4.800px; color: #cfe2ee; margin-left: 1px; }
.up-banner-logo { font-size: 5.500px; width: 25px; }
.up-titlerow { display: flex; justify-content: space-between; align-items: center; margin: 2px 5px 0 3px; height: 14px; }
.up-title { color: #d9a47a; font-size: 14px; white-space: nowrap; }
.up-basket { width: 30px; height: 12px; background: #15699c; color: #fff; font-size: 4.500px; line-height: 12px; text-align: center; }
.up-cols { display: flex; margin: 7px 5px 0 3px; }
.up-left { width: 97px; flex: none; font-size: 4.500px; }
.up-disp { display: flex; justify-content: space-between; height: 12px; border-bottom: 1px solid #dce9f0; margin-bottom: 2px; }
.up-display { font-size: 11px; line-height: 12px; color: #d9a47a; }
.up-help { color: #3a8fb7; font-size: 4.600px; line-height: 7px; }
.up-sel { height: 9px; line-height: 9px; background: #5aaccc; color: #fff; padding-left: 2px; border-radius: 1px; }
.up-link { height: 11.600px; line-height: 12px; color: #3a8fb7; padding-left: 2px; }
.up-none { height: 9px; margin: 4px 0 2px; padding-top: 1px; line-height: 7px; text-align: right; color: #3a8fb7; border-top: 1px solid #e3e3e3; }
.up-item { height: 10px; line-height: 10px; margin-bottom: 1px; background: #5aaccc; color: #e8f4f8; padding-left: 7px; border-radius: 1px; }
.up-right { flex: 1; padding-left: 5px; min-width: 0; }
.up-tools { display: flex; height: 9px; border-bottom: 1px solid #cfe2ec; gap: 1px; font-size: 4.300px; line-height: 8px; color: #3a7fa0; }
.up-tool { background: #d5e9f2; padding: 0 4px; }
.up-tool-r { color: #3a8fb7; }
.up-tools .up-tool-r:nth-child(6) { margin-left: auto; margin-right: 6px; }
.up-facts { display: grid; grid-template-columns: 28px 1fr; column-gap: 5px; grid-auto-rows: 10.700px; margin-top: 8px; align-items: center; }
.up-k { color: #3fb3c5; font-size: 7px; text-align: right; white-space: nowrap; }
.up-v { font-size: 5px; color: #222; white-space: nowrap; }
.up-rev { color: #3a8fb7; margin-left: 10px; }
.up-dots { color: #1f6f9f; font-size: 4px; }
.up-h { color: #d9a47a; font-size: 9px; line-height: 10px; border-bottom: 1px solid #d9a47a; margin-top: 6px; height: 11px; }
.up-p { line-height: 7px; margin-top: 5.500px; white-space: nowrap; }
.up-p + .up-p { margin-top: 4px; }
.up-p + .up-p-m, .up-sub + .up-p-m { margin-top: 1px; }
.up-sub { font-weight: 700; font-size: 5.300px; line-height: 7px; margin-top: 4px; color: #444; }
.up-sub-m { margin-top: 5px; }
.up-sub-go { margin-top: 3.500px; }
.up-caution { background: #fdfbc0; line-height: 7px; padding: 1.500px 0; margin-top: 0; white-space: nowrap; }
.up-src { background: #fdeab5; border-radius: 3px; padding: 0 3px; color: #444; }
.up-src-y { background: #fbe9a8; }
.up-list { margin: 4px 0 0 12px; list-style: disc; }
.up-list li { line-height: 7.300px; }
.up-list a, .up-complete { color: #3a8fb7; }
.up-complete { margin: 4px 0 0 6px; line-height: 7px; }

/* Back to top */
.to-top { position: absolute; left: 1901px; top: 931px; width: 42px; height: 42px; background: #1a2240; display: flex; align-items: center; justify-content: center; }
.to-top-ico { width: 24px; height: 22px; }
```
